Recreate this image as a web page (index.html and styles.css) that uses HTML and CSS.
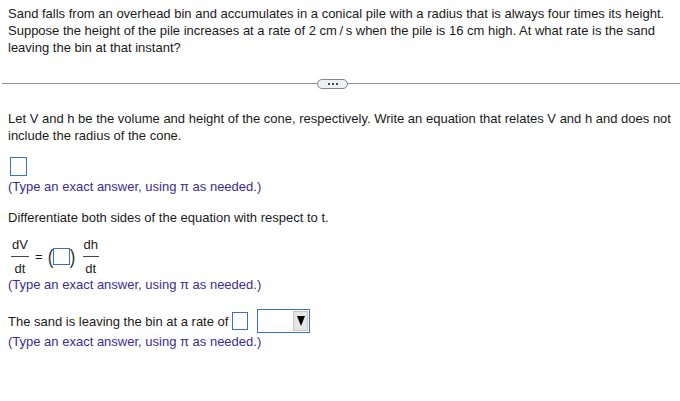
FILE: index.html
```html
<!DOCTYPE html>
<html>
<head>
<meta charset="utf-8">
<link rel="stylesheet" href="styles.css">
</head>
<body>
<div class="question">Sand falls from an overhead bin and accumulates in a conical pile with a radius that is always four times its height. Suppose the height of the pile increases at a rate of 2 cm&thinsp;/&thinsp;s when the pile is 16 cm high. At what rate is the sand leaving the bin at that instant?</div>
<div class="divider">
  <div class="rule left"></div>
  <div class="pill"><span class="dot"></span><span class="dot"></span><span class="dot"></span></div>
  <div class="rule"></div>
</div>
<div class="part">
  <p class="text">Let V and h be the volume and height of the cone, respectively. Write an equation that relates V and h and does not include the radius of the cone.</p>
  <div class="answer-box big"></div>
  <p class="hint first">(Type an exact answer, using π as needed.)</p>
  <p class="text diff">Differentiate both sides of the equation with respect to t.</p>
  <div class="equation">
    <div class="frac"><span class="num">dV</span><span class="den">dt</span></div>
    <span class="eq">=</span>
    <span class="paren">(</span>
    <div class="answer-box small"></div>
    <span class="paren">)</span>
    <div class="frac"><span class="num">dh</span><span class="den">dt</span></div>
  </div>
  <p class="hint">(Type an exact answer, using π as needed.)</p>
  <div class="rate-row">
    <span class="text">The sand is leaving the bin at a rate of</span>
    <div class="answer-box rate"></div>
    <div class="select">
      <span class="select-btn"><svg width="8" height="10" viewBox="0 0 8 10"><polygon points="0,0 8,0 4,10" fill="#000"/></svg></span>
    </div>
  </div>
  <p class="hint">(Type an exact answer, using π as needed.)</p>
</div>
</body>
</html>
```
FILE: styles.css
```css
html, body {
  margin: 0;
  padding: 0;
  background: #ffffff;
}
body {
  font-family: "Liberation Sans", Arial, sans-serif;
  font-size: 13px;
  line-height: 17px;
  color: #1a1a1a;
  padding: 5px 0 0 8px;
}
p { margin: 0; }
.question {
  padding-right: 8px;
}
.divider {
  display: flex;
  align-items: center;
  margin: 22px 0 0 -6px;
  height: 11px;
}
.rule {
  flex: 1;
  height: 1px;
  background: #8d939b;
}
.rule.left {
  flex: none;
  width: 315px;
}
.pill {
  width: 29px;
  height: 8px;
  border: 1px solid #7f8690;
  border-radius: 5px;
  background: #eef0f3;
  display: flex;
  align-items: center;
  justify-content: center;
  gap: 2px;
}
.dot {
  width: 2px;
  height: 2px;
  background: #444a52;
}
.part {
  padding-top: 21px;
  padding-right: 8px;
}
.answer-box {
  border: 1px solid #3a6fd0;
  background: #fff;
  box-sizing: border-box;
}
.answer-box.big {
  width: 17px;
  height: 19px;
  margin: 13px 0 0 2px;
}
.hint {
  color: #3b2d92;
}
.hint.first {
  margin-top: 2px;
}
.diff {
  margin-top: 14px;
}
.equation {
  display: flex;
  align-items: center;
  margin: 10px 0 0 2px;
  height: 40px;
}
.frac {
  display: flex;
  flex-direction: column;
  align-items: center;
  padding: 0 1px;
}
.frac .num {
  line-height: 15px;
  border-bottom: 1px solid #444;
  padding: 0 1px 4px;
}
.frac .den {
  line-height: 15px;
  padding-top: 4px;
}
.eq {
  margin: 0 4px 0 5px;
}
.paren {
  font-size: 21px;
  font-weight: 100;
  line-height: 21px;
  color: #333;
  transform: scaleX(0.8);
}
.answer-box.small {
  width: 17px;
  height: 17px;
  margin: 0 -1px;
}
.paren + .frac {
  margin-left: 6px;
}
.rate-row {
  display: flex;
  align-items: center;
  margin-top: 16px;
  height: 24px;
}
.answer-box.rate {
  width: 16px;
  height: 18px;
  margin-left: 4px;
}
.select {
  width: 53px;
  height: 24px;
  margin-left: 9px;
  border: 1px solid #3a6fd0;
  box-sizing: border-box;
  display: flex;
  justify-content: flex-end;
  align-items: center;
  padding-right: 1px;
}
.select-btn {
  width: 15px;
  height: 20px;
  background: #e6e6e6;
  border: 1px solid #c4c4c4;
  box-sizing: border-box;
  display: flex;
  align-items: center;
  justify-content: center;
}
.select-btn svg {
  display: block;
}
```
